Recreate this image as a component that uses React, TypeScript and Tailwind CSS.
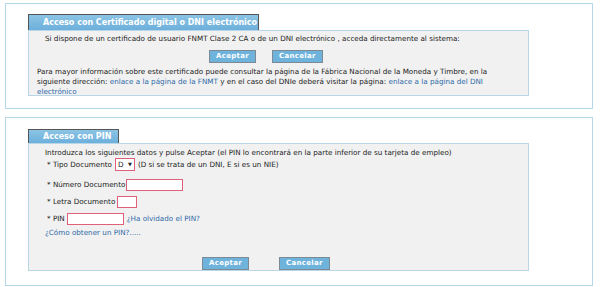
export default function App() {
  const btn =
    "h-[13px] px-[6px] border border-[#7d8a93] bg-[#6db3dc] text-white font-bold text-[7px] leading-[11px] tracking-[0.3px]";
  const input = "h-[12px] border border-[#e0607a] bg-white";
  const link = "text-[#2f6aa8]";

  return (
    <div
      className="w-[600px] h-[287px] bg-white text-[#222] text-[7.2px] leading-[9px]"
      style={{ fontFamily: "'DejaVu Sans', Verdana, sans-serif" }}
    >
      {/* Certificado */}
      <div className="ml-[5px] mt-[3px] w-[588px] h-[106px] border border-[#b5d8e8] pt-[10px] pl-[22px]">
        <div className="w-[231px] h-[17px] bg-gradient-to-b from-[#8cc4e4] to-[#6aaedb] border border-[#555] border-b-0 text-white font-bold text-[8px] leading-[16px] pl-[14px]">
          Acceso con Certificado digital o DNI electrónico
        </div>
        <div className="w-[501px] h-[66px] bg-[#f1f1f1] border border-[#b8d6e6] -mt-px pl-[8px] pr-[6px] pt-[3px]">
          <p className="pl-[8px]">
            Si dispone de un certificado de usuario FNMT Clase 2 CA o de un DNI electrónico , acceda directamente al sistema:
          </p>
          <div className="flex gap-[16px] ml-[172px] mt-[7px]">
            <button className={btn}>Aceptar</button>
            <button className={btn}>Cancelar</button>
          </div>
          <p className="mt-[4px] leading-[10px] whitespace-nowrap">
            Para mayor información sobre este certificado puede consultar la página de la Fábrica Nacional de la Moneda y Timbre, en la
            <br />
            siguiente dirección: <span className={link}>enlace a la página de la FNMT</span> y en el caso del DNIe deberá visitar la página:{" "}
            <span className={link}>enlace a la página del DNI</span>
            <br />
            <span className={link}>electrónico</span>
          </p>
        </div>
      </div>

      {/* PIN */}
      <div className="ml-[5px] mt-[8px] w-[588px] h-[169px] border border-[#b5d8e8] pt-[11px] pl-[22px]">
        <div className="w-[91px] h-[15px] bg-gradient-to-b from-[#8cc4e4] to-[#6aaedb] border border-[#555] border-b-0 text-white font-bold text-[8px] leading-[14px] pl-[14px]">
          Acceso con PIN
        </div>
        <div className="w-[501px] h-[128px] bg-[#f1f1f1] border border-[#b8d6e6] -mt-px pl-[16px] pt-[4px]">
          <p>Introduzca los siguientes datos y pulse Aceptar (el PIN lo encontrará en la parte inferior de su tarjeta de empleo)</p>
          <div className="flex flex-col gap-[4px] mt-[1px] pl-[2px]">
            <div className="flex items-center h-[13px]">
              <span>* Tipo Documento</span>
              <span className="ml-[3px] w-[20px] h-[13px] border border-[#e0607a] bg-white flex items-center justify-between px-[2px]">
                <span>D</span>
                <span className="text-[5px]">▼</span>
              </span>
              <span className="ml-[3px]">(D si se trata de un DNI, E si es un NIE)</span>
            </div>
            <div className="flex items-center h-[13px] mt-[3px]">
              <span>* Número Documento</span>
              <span className={`${input} ml-[1px] w-[57px]`} />
            </div>
            <div className="flex items-center h-[13px]">
              <span>* Letra Documento</span>
              <span className={`${input} ml-[2px] w-[20px]`} />
            </div>
            <div className="flex items-center h-[13px]">
              <span>* PIN</span>
              <span className={`${input} ml-[2px] w-[57px]`} />
              <span className={`${link} ml-[3px]`}>¿Ha olvidado el PIN?</span>
            </div>
          </div>
          <p className={`${link} mt-[3px]`}>¿Cómo obtener un PIN?.....</p>
          <div className="flex gap-[30px] ml-[157px] mt-[20px]">
            <button className={btn}>Aceptar</button>
            <button className={btn}>Cancelar</button>
          </div>
        </div>
      </div>
    </div>
  );
}
